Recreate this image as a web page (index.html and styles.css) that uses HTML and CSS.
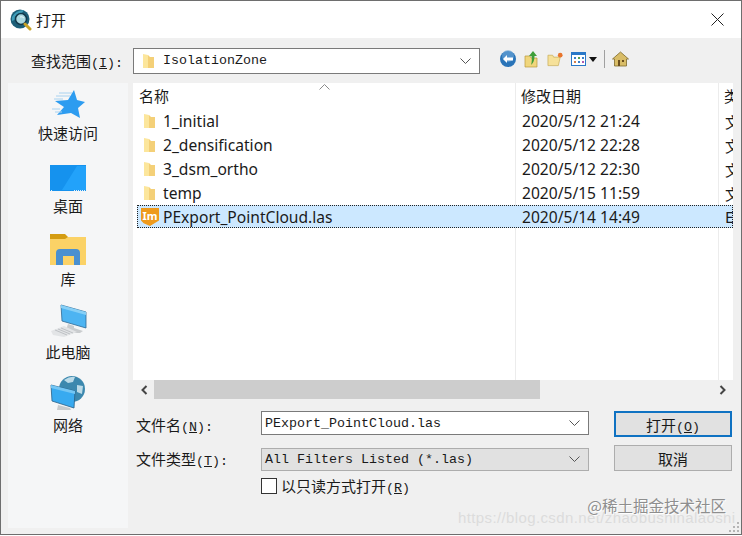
FILE: index.html
```html
<!DOCTYPE html>
<html lang="zh-CN">
<head>
  <meta charset="UTF-8" />
  <title>打开</title>
  <link rel="stylesheet" href="styles.css">
</head>
<body>
  <svg class="defs" width="0" height="0">
    <symbol id="folder" viewBox="0 0 14 16">
      <path d="M1 1l5 1v13H1z" fill="#fce69c"/>
      <path d="M6 2l2 2h4v11H6z" fill="#f4d078"/>
    </symbol>
    <symbol id="chevron" viewBox="0 0 11 6">
      <path d="M.5.5l5 5 5-5" fill="none" stroke="#555"/>
    </symbol>
  </svg>

  <div class="window">
    <div class="titlebar">
      <svg class="app-icon" width="22" height="22" viewBox="0 0 22 22">
        <circle cx="10" cy="10" r="9.500" fill="#1d5f78"/>
        <path d="M2 8Q6 1 14 1Q11 6 7 6Q6 11 2 12Z" fill="#3f9db8"/>
        <circle cx="11" cy="10" r="5.500" fill="#a9d8e0" stroke="#12384a" stroke-width="1.500"/>
        <path d="M10 8q2-1 4 1" stroke="#e9f6f8" fill="none"/>
        <path d="M15 15l5 5" stroke="#c9a227" stroke-width="3" stroke-linecap="round"/>
      </svg>
      <span class="title">打开</span>
      <svg class="close" width="13" height="13" viewBox="0 0 13 13">
        <path d="M.5.5l12 12M12.5.5l-12 12" stroke="#222" stroke-width="1" fill="none"/>
      </svg>
    </div>

    <div class="content">
      <div class="lookin">
        <label class="lookin-label">查找范围<span class="key">(<u>I</u>):</span></label>
        <div class="combo lookin-combo">
          <svg class="small-folder" width="14" height="16"><use href="#folder"/></svg>
          <span class="mono">IsolationZone</span>
          <svg class="chev" width="11" height="6"><use href="#chevron"/></svg>
        </div>
        <div class="tools">
          <svg width="18" height="18" viewBox="0 0 18 18">
            <circle cx="9" cy="9" r="8" fill="#2a74b8"/><circle cx="9" cy="6" r="6" fill="#6fa8d8" opacity=".6"/>
            <path d="M4 9l4-4v2.500h6v3H8V13z" fill="#fff"/>
          </svg>
          <svg width="16" height="18" viewBox="0 0 16 18">
            <path d="M1 6h5l1 2h6v9H1z" fill="#f0d67c" stroke="#b99a3c" stroke-width=".7"/>
            <path d="M9 1l4 5h-2.500c0 4-1 7-3.500 9 1-3 1-6 .5-9H5z" fill="#3f9e3a"/>
          </svg>
          <svg width="17" height="16" viewBox="0 0 18 16">
            <path d="M1 4h5l1 2h7l-2 9H1z" fill="#f6e19a" stroke="#c6a94f" stroke-width=".7"/>
            <circle cx="14" cy="4" r="2.500" fill="#e8742c"/>
          </svg>
          <span class="views">
            <svg width="15" height="14" viewBox="0 0 15 14">
              <rect x=".5" y=".5" width="14" height="13" fill="#fff" stroke="#2a78c8"/>
              <path d="M0 0h15v3H0z" fill="#2a78c8"/>
              <path d="M3 5h2v2H3z" fill="#3a7fc8"/><path d="M7 5h2v2H7z" fill="#58a04c"/><path d="M11 5h2v2h-2z" fill="#3a7fc8"/>
              <path d="M3 9h2v2H3z" fill="#d8804a"/><path d="M7 9h2v2H7z" fill="#3a7fc8"/><path d="M11 9h2v2h-2z" fill="#b05ab0"/>
            </svg>
            <i class="caret"></i>
          </span>
          <i class="tool-sep"></i>
          <svg width="17" height="16" viewBox="0 0 17 16">
            <path d="M8.500 1L.5 8h2v7h12V8h2z" fill="#d9bd68" stroke="#7d6a2c" stroke-width=".8"/>
            <path d="M6 9h2v6H6z" fill="#6b4f1e"/><path d="M10 9h2v2h-2z" fill="#6b4f1e"/>
          </svg>
        </div>
      </div>

      <div class="main">
        <nav class="sidebar">
          <div class="place">
            <svg width="36" height="30" viewBox="0 0 36 30">
              <path d="M24 1l3 10 8 2-7 6 2 10-9-5-14 2 7-8-9-6 13-1z" fill="#2d9cf0"/>
              <path d="M9 4h13M6 7h14M4 10h9M2 20h8M5 23h7" stroke="#a8d2f0" stroke-width="1"/>
            </svg>
            <span>快速访问</span>
          </div>
          <div class="place">
            <svg width="36" height="27" viewBox="0 0 36 27">
              <rect width="36" height="26" fill="#1592ee"/>
              <path d="M12 25L27 1h9v24z" fill="#22a2fa"/>
              <path d="M1 25.500h2M24 25.500h11" stroke="#e2f2fd" stroke-dasharray="1 1"/>
            </svg>
            <span>桌面</span>
          </div>
          <div class="place">
            <svg width="36" height="31" viewBox="0 0 36 31">
              <path d="M0 3h36v28H0z" fill="#fbd266"/>
              <path d="M0 0h15l3 3-3 2H0z" fill="#d49c12"/>
              <path d="M6 31V19a4 4 0 0 1 4-4h16a4 4 0 0 1 4 4v12h-6V22H13v9z" fill="#4a90d0"/>
            </svg>
            <span>库</span>
          </div>
          <div class="place">
            <svg width="37" height="34" viewBox="0 0 37 34">
              <path d="M11 1l25 7v16L12 17z" fill="#4db4f2" stroke="#2f6a94" stroke-width=".8"/>
              <path d="M11 1l25 7v3L11 4z" fill="#86cff6"/>
              <path d="M18 20l6 2v2l9 3-3 2H21l-5-3z" fill="#c9ccce"/>
              <path d="M1 27l13-5 13 6-13 5-11-2z" fill="#e2e4e6"/>
              <path d="M5 26l12 5M8 25l12 5M11 24l12 5" stroke="#b4b8bb" stroke-width=".8"/>
            </svg>
            <span>此电脑</span>
          </div>
          <div class="place">
            <svg width="36" height="35" viewBox="0 0 36 35">
              <circle cx="22" cy="13" r="13" fill="#3c88ae"/>
              <path d="M14 4q6-4 11-3l-2 5-5 1zM27 9l6 1-1 8-5-2z" fill="#bcdbe8"/>
              <path d="M1 9l24 6-1 17L2 25z" fill="#38aaf0" stroke="#2a5f86" stroke-width=".8"/>
              <path d="M1 9l24 6v3L1 12z" fill="#74c6f4"/>
              <path d="M8 29l12 3 1 2H7z" fill="#c8cbcd"/>
            </svg>
            <span>网络</span>
          </div>
        </nav>

        <div class="right">
          <div class="list">
            <div class="list-head">
              <span class="col-name">名称</span>
              <svg class="sort" width="11" height="6" viewBox="0 0 11 6"><path d="M.5 5.500l5-5 5 5" fill="none" stroke="#8a8a8a"/></svg>
              <span class="col-date">修改日期</span>
              <span class="col-type">类</span>
            </div>
            <div class="row">
              <span class="col-name"><svg class="row-icon" width="14" height="16"><use href="#folder"/></svg>1_initial</span>
              <span class="col-date">2020/5/12 21:24</span><span class="col-type">文</span>
            </div>
            <div class="row">
              <span class="col-name"><svg class="row-icon" width="14" height="16"><use href="#folder"/></svg>2_densification</span>
              <span class="col-date">2020/5/12 22:28</span><span class="col-type">文</span>
            </div>
            <div class="row">
              <span class="col-name"><svg class="row-icon" width="14" height="16"><use href="#folder"/></svg>3_dsm_ortho</span>
              <span class="col-date">2020/5/12 22:30</span><span class="col-type">文</span>
            </div>
            <div class="row">
              <span class="col-name"><svg class="row-icon" width="14" height="16"><use href="#folder"/></svg>temp</span>
              <span class="col-date">2020/5/15 11:59</span><span class="col-type">文</span>
            </div>
            <div class="row selected">
              <span class="col-name"><span class="las-icon">Im</span>PExport_PointCloud.las</span>
              <span class="col-date">2020/5/14 14:49</span><span class="col-type">E</span>
            </div>
          </div>

          <div class="hscroll">
            <svg class="arrow" width="8" height="10" viewBox="0 0 8 10"><path d="M6.500 1l-4 4 4 4" fill="none" stroke="#444" stroke-width="2"/></svg>
            <div class="track"><div class="thumb"></div></div>
            <svg class="arrow" width="8" height="10" viewBox="0 0 8 10"><path d="M1.500 1l4 4-4 4" fill="none" stroke="#444" stroke-width="2"/></svg>
          </div>

          <div class="form">
            <label class="name-label">文件名<span class="key">(<u>N</u>):</span></label>
            <div class="combo field">
              <span class="mono">PExport_PointCloud.las</span>
              <svg class="chev" width="11" height="6"><use href="#chevron"/></svg>
            </div>
            <button class="btn default">打开<span class="key">(<u>O</u>)</span></button>

            <label class="type-label">文件类型<span class="key">(<u>T</u>):</span></label>
            <div class="combo field filter">
              <span class="mono">All Filters Listed (*.las)</span>
              <svg class="chev" width="11" height="6"><use href="#chevron"/></svg>
            </div>
            <button class="btn cancel">取消</button>

            <div class="readonly">
              <i class="check"></i>
              <span>以只读方式打开<span class="key">(<u>R</u>)</span></span>
            </div>
          </div>
        </div>
      </div>
    </div>

    <div class="marks">
      <span class="mark-url">https://blog.csdn.net/zhaobushinalaoshi</span>
      <span class="mark-site">@稀土掘金技术社区</span>
    </div>
    <svg class="grip" width="12" height="12" viewBox="0 0 12 12">
      <path d="M9 0h2v2H9zM5 4h2v2H5zM9 4h2v2H9zM1 8h2v2H1zM5 8h2v2H5zM9 8h2v2H9z" fill="#b5b5b5"/>
    </svg>
  </div>
</body>
</html>
```

FILE: styles.css
```css
* { box-sizing: border-box; margin: 0; padding: 0; }
html, body { width: 742px; height: 536px; overflow: hidden; }
body {
  background: #fff;
  font-family: "Noto Sans CJK SC", sans-serif;
  font-size: 15px;
  color: #1a1a1a;
}
.defs { position: absolute; }
.key { font-family: "Liberation Mono", monospace; font-size: 13.33px; }
u { text-underline-offset: 1px; }

.window {
  position: relative;
  width: 742px; height: 535px;
  border: 1px solid #6e6e6e;
  display: flex; flex-direction: column;
  overflow: hidden;
}

.titlebar {
  height: 37px; flex: none;
  background: #fff;
  display: flex; align-items: center;
  padding: 0 17px 0 9px;
}
.app-icon { margin-right: 4px; }
.title { font-size: 15px; flex: 1; }

.content {
  flex: 1;
  background: #f0f0f0;
  display: flex; flex-direction: column;
  min-height: 0;
}

.lookin {
  height: 45px; flex: none;
  display: flex; align-items: center;
  padding-left: 30px;
}
.lookin-label { width: 102px; flex: none; }
.combo {
  display: flex; align-items: center;
  border: 1px solid #7a7a7a;
  background: #fff;
}
.lookin-combo { width: 347px; height: 26px; padding: 0 8px; }
.small-folder { margin-right: 7px; }
.mono {
  font-family: "Liberation Mono", monospace;
  font-size: 13.33px;
  flex: 1;
  white-space: nowrap;
}
.tools {
  display: flex; align-items: center;
  margin: 0 0 3px 19px;
  gap: 7px;
}
.views { display: flex; align-items: center; gap: 3px; }
.caret {
  width: 0; height: 0;
  border: 4.500px solid transparent;
  border-top: 5px solid #111;
  border-bottom: 0;
}
.tool-sep { width: 1px; height: 18px; background: #a0a0a0; }

.main { flex: 1; display: flex; min-height: 0; }

.sidebar {
  width: 120px; flex: none;
  margin: 0 5px 6px 7px;
  background: #f5f6f7;
  display: grid;
  grid-template-rows: repeat(5, 73px);
  align-content: start;
  text-align: center;
}
.place {
  display: flex; flex-direction: column;
  align-items: center; justify-content: flex-end;
  padding-bottom: 13px;
  line-height: 20px;
}
.place span { margin-top: 4px; }

.right { flex: 1; display: flex; flex-direction: column; min-width: 0; padding-right: 8px; }

.list {
  height: 297px; flex: none;
  background: #fff;
  position: relative;
  font-family: "Noto Sans", sans-serif;
  font-size: 15.6px;
  overflow: hidden;
}
.list-head, .row { display: grid; grid-template-columns: 382px 203px 1fr; align-items: center; }
.list-head {
  height: 26px;
  padding-bottom: 2px;
  font-family: "Noto Sans CJK SC", sans-serif;
  font-size: 15px;
}
.list-head .col-name { padding-left: 6px; }
.list-head .col-date, .list-head .col-type { padding-left: 6px; }
.sort { position: absolute; left: 186px; top: 1px; }

/* column rules keep running below the rows */
.list::before, .list::after {
  content: "";
  position: absolute; top: 0; bottom: 0;
  width: 1px; background: #ececec;
}
.list::before { left: 382px; }
.list::after { left: 585px; }

.row { height: 24px; margin-left: 4px; grid-template-columns: 378px 203px 1fr; white-space: nowrap; }
.row .col-name { display: flex; align-items: center; }
.row .col-date { padding-left: 7px; }
.row .col-type { padding-left: 7px; font-family: "Noto Sans CJK SC", sans-serif; font-size: 15px; }
.row-icon { margin: 0 6px; }
.selected {
  height: 23px;
  background: #cce8ff;
  outline: 1px dotted #222;
  outline-offset: -1px;
  position: relative; z-index: 1;
}
.las-icon {
  width: 18px; height: 18px;
  margin: 1px 4px 0 4px;
  background: #ee9a1c;
  color: #fff;
  font-size: 11px; font-weight: 700; line-height: 15px;
  text-align: center;
  clip-path: polygon(0 0, 100% 0, 100% 70%, 50% 100%, 15% 85%, 0 70%);
}

.hscroll { height: 19px; flex: none; display: flex; align-items: center; }
.arrow { margin: 0 6px; flex: none; }
.arrow:first-child { margin-left: 7px; }
.track { flex: 1; height: 19px; }
.thumb { width: 386px; height: 19px; background: #cdcdcd; }

.form {
  display: grid;
  grid-template-columns: 125px 328px 143px;
  grid-template-rows: 36px 36px auto;
  align-items: center;
  margin-top: 6px;
  padding-left: 3px;
}
.name-label { margin-top: 2px; }
.type-label { margin-bottom: 2px; }
.field { height: 24px; padding: 0 8px 0 3px; border-color: #7a7a7a; }
.filter { height: 23px; background: #e1e1e1; border-color: #adadad; }
.btn {
  justify-self: end;
  width: 118px; height: 26px;
  background: #e1e1e1;
  border: 1px solid #adadad;
  font: inherit;
  color: inherit;
}
.default { border: 2px solid #0f72c2; margin-top: 2px; }
.cancel { margin-bottom: 2px; }
.readonly {
  grid-column: 2 / 4;
  display: flex; align-items: center;
  margin-top: -2px;
}
.check { width: 16px; height: 16px; border: 1px solid #333; background: #fff; margin-right: 4px; }

.marks {
  position: absolute; right: 4px; bottom: 8px;
  height: 30px;
  width: 285px;
  pointer-events: none;
}
.mark-url {
  position: absolute; left: 6px; bottom: 0;
  font-family: "Liberation Sans", sans-serif;
  font-size: 15px;
  letter-spacing: .38px;
  color: #dcdcdc;
  white-space: nowrap;
}
.mark-site {
  position: absolute; right: 11px; top: -2px;
  font-size: 15.500px;
  color: #8e8e8e;
  text-shadow: 1px 1px 0 #fff;
  white-space: nowrap;
}
.grip { position: absolute; right: 1px; bottom: 0; }
```
